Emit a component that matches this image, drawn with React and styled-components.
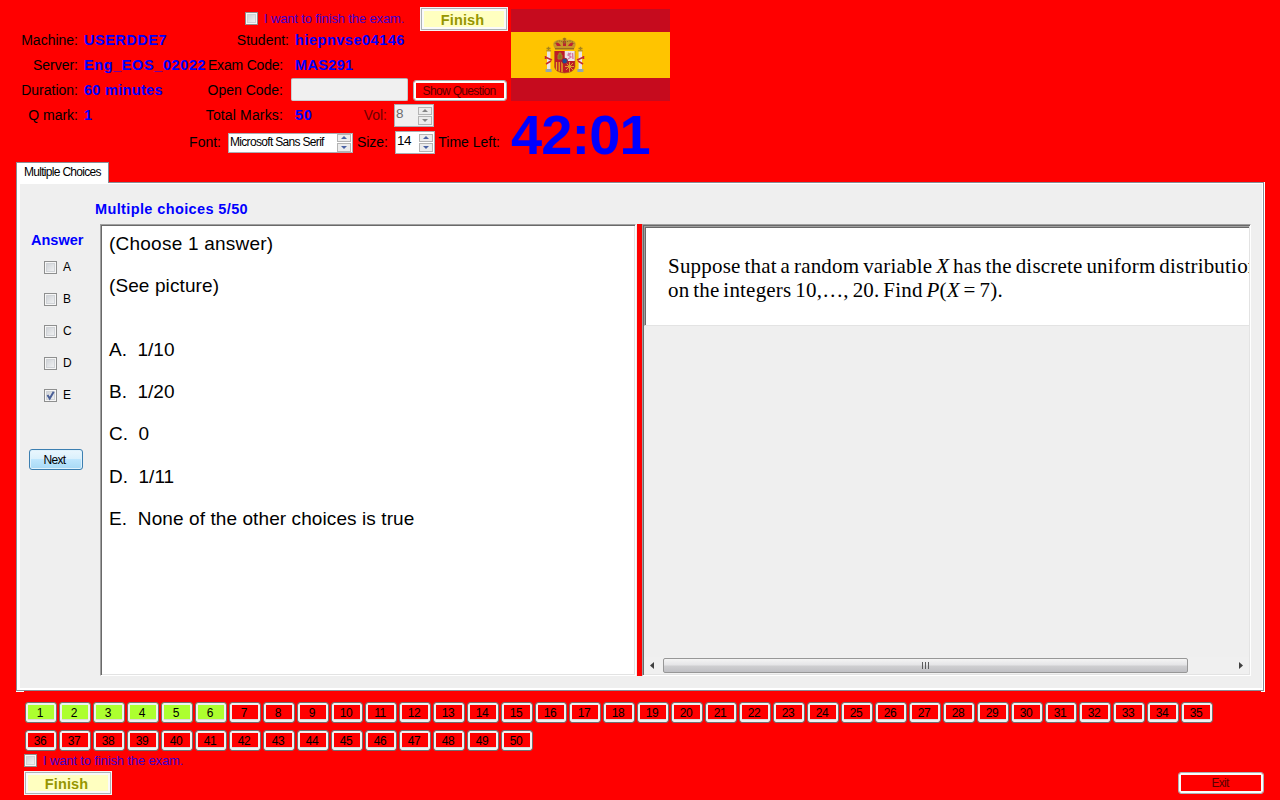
import React from "react";
import styled, { createGlobalStyle } from "styled-components";

const Global = createGlobalStyle`
  * { box-sizing: border-box; }
  body { margin: 0; background: #ff0000; overflow: hidden; }
  button { font: inherit; margin: 0; padding: 0; }
  svg { display: block; flex: none; }
`;

const Page = styled.div`
  width: 1280px;
  height: 800px;
  display: flex;
  flex-direction: column;
  background: #ff0000;
  color: #000;
  font-family: "Liberation Sans", Arial, sans-serif;
  font-size: 14px;
  line-height: 16px;
  white-space: pre;
`;

const Header = styled.header`
  height: 162px;
  flex: none;
  display: flex;
`;

const Info = styled.div`
  width: 511px;
  flex: none;
  display: flex;
  flex-direction: column;
`;

const InfoRow = styled.div`
  height: ${(p) => p.$h || 25}px;
  flex: none;
  display: flex;
  align-items: center;
`;

const TopRow = styled(InfoRow)`
  align-items: flex-start;
  padding: 7px 0 0 245px;
`;

const Label = styled.span`
  width: ${(p) => p.$w}px;
  flex: none;
  text-align: right;
  padding-bottom: 2px;
  letter-spacing: ${(p) => p.$ls || 0}px;
  color: ${(p) => (p.$dim ? "#6d0000" : "#000")};
`;

const Value = styled.span`
  width: ${(p) => p.$w}px;
  flex: none;
  padding: 0 0 2px ${(p) => p.$left || 6}px;
  font-size: 14.5px;
  font-weight: bold;
  color: #0000ff;
  letter-spacing: ${(p) => p.$ls || 0}px;
`;

const Check = styled.span`
  width: 13px;
  height: 13px;
  flex: none;
  display: flex;
  border: 1px solid #8e8f8f;
  background: linear-gradient(135deg, #c8ccd1, #f8f8f8);
  box-shadow: inset 0 0 0 1px #f6f6f6, inset 0 0 0 2px #d0d3d7;
`;

const ConfirmWrap = styled.div`
  display: flex;
  height: 13px;
  width: 175px;
  flex: none;
  align-items: center;
  margin-top: ${(p) => p.$top || 0}px;
`;

const ConfirmText = styled.span`
  padding-left: 6px;
  font-size: 13px;
  letter-spacing: -0.14px;
  color: #4000d0;
`;

const FinishButton = styled.button`
  width: 88px;
  height: 24px;
  flex: none;
  border: 1px solid #f4f4f4;
  background: #ffffc0;
  box-shadow: inset 0 0 0 1px #adb2b5, inset 0 0 0 3px #fafafa;
  font-size: 14.5px;
  font-weight: bold;
  letter-spacing: 0.15px;
  color: #969600;
  padding: 2px 3px 0 0;
`;

const RedButton = styled.button`
  width: ${(p) => p.$w}px;
  height: ${(p) => p.$h}px;
  flex: none;
  border: 1px solid #adb2b5;
  border-radius: 3px;
  background: #ff0000;
  box-shadow: inset 0 0 0 2px #fcfcfc;
  font-size: 12px;
  letter-spacing: ${(p) => p.$ls}px;
  color: #5a0000;
  padding-right: 2px;
`;

const CodeInput = styled.div`
  width: 117px;
  height: 23px;
  margin: 0 5px 2px 8px;
  background: #f0f0f0;
  border: 1px solid #c9cdd0;
  border-top-color: #abadb3;
  border-radius: 2px;
`;

const SpinBox = styled.div`
  width: ${(p) => p.$w}px;
  height: ${(p) => p.$h}px;
  flex: none;
  display: flex;
  align-items: center;
  justify-content: space-between;
  margin-left: 7px;
  padding-left: 1px;
  border: 1px solid #abadb3;
  background: ${(p) => (p.$off ? "#f0f0f0" : "#fff")};
  color: ${(p) => (p.$off ? "#6d6d6d" : "#000")};
  font-size: ${(p) => p.$fs}px;
  letter-spacing: ${(p) => p.$ls || 0}px;
`;

const SpinText = styled.span`
  padding-bottom: ${(p) => p.$lift}px;
`;

const Arrows = styled.span`
  width: 14px;
  height: 18px;
  margin-right: 1px;
  display: grid;
  grid-template-rows: 1fr 1fr;
  gap: 1px;
`;

const Arrow = styled.span`
  border: 1px solid #b4b4b4;
  background: #ececec;
  display: flex;
  align-items: center;
  justify-content: center;
`;

const Side = styled.div`
  display: flex;
  flex-direction: column;
  padding-top: 9px;
`;

const Timer = styled.div`
  font-size: 56px;
  line-height: 64px;
  font-weight: bold;
  color: #0000ff;
  margin-top: 2px;
  letter-spacing: -0.9px;
`;

const Tab = styled.div`
  width: 93px;
  height: 21px;
  flex: none;
  position: relative;
  margin: 0 0 -1px 16px;
  padding: 1px 0 0 7px;
  border: 1px solid #898c95;
  border-bottom: 0;
  background: #fff;
  font-size: 12px;
  line-height: 17px;
  letter-spacing: -0.7px;
`;

const PanelFrame = styled.div`
  width: 1249px;
  height: 510px;
  flex: none;
  margin-left: 16px;
  padding-right: 1px;
  background: linear-gradient(90deg, #fff 8px, #ff0000 8px, #ff0000 1245px, #fff 1245px);
`;

const Panel = styled.main`
  height: 509px;
  display: flex;
  border: 1px solid #898c95;
  background: #efefef;
  box-shadow: inset 3px 0 #fff, inset -1px 1px #fff, inset 0 -2px #fff;
`;

const Answers = styled.aside`
  width: 83px;
  flex: none;
  display: flex;
  flex-direction: column;
  padding: 49px 0 0 12px;
`;

const Heading = styled.h2`
  margin: 0 0 0 ${(p) => p.$left}px;
  font-size: 14.5px;
  line-height: 16px;
  font-weight: bold;
  letter-spacing: ${(p) => p.$ls}px;
  color: #0000ff;
`;

const Choices = styled.div`
  display: flex;
  flex-direction: column;
  gap: 19px;
  padding: 13px 0 0 15px;
`;

const Choice = styled.label`
  display: flex;
  height: 13px;
  align-items: center;
  gap: 6px;
  font-size: 12px;
  line-height: 13px;
`;

const NextButton = styled.button`
  width: 54px;
  height: 21px;
  margin-top: 47px;
  border: 1px solid #3c7fb1;
  border-radius: 3px;
  background: linear-gradient(#eaf6fd, #d9f0fc 50%, #bee6fd 50%, #a7d9f5);
  box-shadow: inset 0 0 0 1px #dff2fc;
  font-size: 12px;
  letter-spacing: -0.7px;
  padding-right: 3px;
`;

const Work = styled.section`
  display: flex;
  flex-direction: column;
  padding-top: 18px;
`;

const Split = styled.div`
  display: flex;
  height: 452px;
  margin-top: 7px;
`;

const QuestionText = styled.div`
  width: 536px;
  border: 1px solid #fff;
  border-top-color: #a0a0a0;
  border-left-color: #a0a0a0;
  box-shadow: inset 1px 1px #696969, inset -1px -1px #e3e3e3;
  background: #fff;
  padding: 8px 0 0 8px;
  font-size: 19px;
  line-height: 22px;
`;

const Line = styled.p`
  margin: 0 0 ${(p) => p.$gap}px;
  height: 22px;
  letter-spacing: ${(p) => p.$ls}px;
`;

const Splitter = styled.div`
  width: 5px;
  margin: 0 0 0 1px;
  background: #ff0000;
`;

const PictureArea = styled.div`
  width: 609px;
  border: 1px solid #fff;
  border-top-color: #a0a0a0;
  border-left-color: #a0a0a0;
  box-shadow: inset 1px 1px #696969, inset -1px -1px #e3e3e3;
  display: flex;
  flex-direction: column;
  padding: 1px;
`;

const Picture = styled.div`
  height: 100px;
  overflow: hidden;
  flex: none;
  border-top: 1px solid #a0a0a0;
  border-left: 1px solid #a0a0a0;
  border-bottom: 1px solid #e3e3e3;
  box-shadow: inset 1px 1px #696969;
  background: #fff;
  padding: 27px 0 0 23px;
  font-family: "Liberation Serif", "Times New Roman", serif;
  font-size: 21px;
  line-height: 24px;
  letter-spacing: 0.2px;
  word-spacing: -1.6px;
`;

const MathLine = styled.div`
  height: 24px;
`;

const ScrollBar = styled.div`
  height: 17px;
  margin-top: auto;
  display: flex;
  align-items: center;
  justify-content: space-between;
  background: #f0f0f0;
  padding: 0 6px 0 6px;
`;

const Thumb = styled.div`
  width: 525px;
  height: 15px;
  margin-right: 43px;
  display: flex;
  align-items: center;
  justify-content: center;
  gap: 2px;
  border: 1px solid #979797;
  border-radius: 2px;
  background: linear-gradient(#f4f4f4, #e4e4e6 48%, #cfcfd1 52%, #c0c0c4);
`;

const Grip = styled.span`
  width: 1px;
  height: 7px;
  background: #5c5c5c;
`;

const NumberGrid = styled.nav`
  display: grid;
  grid-template-columns: repeat(35, 32px);
  grid-auto-rows: 21px;
  gap: 7px 2px;
  margin: 10px 0 0 25px;
`;

const NumberButton = styled.button`
  border: 1px solid #707070;
  border-radius: 3px;
  background: ${(p) => (p.$done ? "#adff2f" : "#ff0000")};
  box-shadow: inset 0 0 0 2px #f0f0f0, inset 0 -3px #dcdcdc;
  font-size: 12px;
  line-height: 17px;
  letter-spacing: -0.4px;
  color: #000;
  padding: 1px 2px 0 0;
`;

const Footer = styled.footer`
  display: flex;
  align-items: flex-end;
  justify-content: space-between;
  padding: 3px 16px 0 24px;
`;

const FooterLeft = styled.div`
  display: flex;
  flex-direction: column;
  gap: 4px;
`;

const FooterExit = styled.div`
  display: flex;
  padding-bottom: 1px;
`;

function Spinner({ off }) {
  const c = off ? "#858585" : "#4a62a4";
  return (
    <Arrows>
      <Arrow>
        <svg width="6" height="3" viewBox="0 0 6 3">
          <path d="M0 3L3 0L6 3Z" fill={c} />
        </svg>
      </Arrow>
      <Arrow>
        <svg width="6" height="3" viewBox="0 0 6 3">
          <path d="M0 0L3 3L6 0Z" fill={c} />
        </svg>
      </Arrow>
    </Arrows>
  );
}

function Confirm({ top }) {
  return (
    <ConfirmWrap $top={top}>
      <Check />
      <ConfirmText>I want to finish the exam.</ConfirmText>
    </ConfirmWrap>
  );
}

function Pillar({ x, flip }) {
  return (
    <g transform={flip ? `translate(${x + 7} 0) scale(-1 1)` : `translate(${x} 0)`}>
      <path d="M1.5 39.5h4M3.5 37.8v4" stroke="#a5821c" strokeWidth="1.3" />
      <rect x="2" y="42" width="3.4" height="18" fill="#e8e5e3" />
      <rect x="1.3" y="41" width="4.8" height="1.5" fill="#b99628" />
      <rect x="0.6" y="60" width="6" height="3" fill="#93a6ae" />
      <path d="M0 48L7 51M1 55L6 52M0.5 47V50" stroke="#c42a32" strokeWidth="1.5" />
    </g>
  );
}

function Flag() {
  return (
    <svg width="159" height="92" viewBox="0 0 159 92">
      <rect width="159" height="92" fill="#c60b1e" />
      <rect y="23" width="159" height="46" fill="#ffc400" />
      <g fill="none">
        <Pillar x={34} />
        <Pillar x={66} flip />
        <path d="M44 40C39 32 46 30 53.5 31C61 30 68 32 63 40Z" fill="#c7962a" />
        <path d="M46 37C43 33 47 32 50 37M57 37C60 32 64 33 61 37M52 37V32H55V37" fill="#bd2231" />
        <path d="M44 39.8H63M53.5 28.8V34M51.8 30H55.2" stroke="#9a6d1c" strokeWidth="1.5" />
        <path d="M44 35C45 31 51 31 53.5 35C56 31 62 31 63 35" stroke="#8a6f26" strokeWidth="1" strokeDasharray="1.5 1" />
        <path d="M43.5 42H64V58Q63 63.5 53.7 64Q44.5 63.5 43.5 58Z" fill="#bd1b28" />
        <path d="M53.7 42H64V52H53.7Z" fill="#ece4e7" />
        <path d="M45.5 53V61M48.2 53V62.5M51 53V63" stroke="#e7b51d" strokeWidth="1.3" />
        <path d="M47 50V46H48V44H50V46H51V50Z" fill="#8b7022" stroke="#a48124" />
        <path d="M60 44L57 46L60 48L57 50M61.5 44L62 50M57 44L60 46" stroke="#d778a2" strokeWidth="1.4" />
        <path d="M55 54L62 61M62 54L55 61M58.5 53V63M54 57.5H63" stroke="#dda129" strokeWidth="1" />
        <circle cx="53.7" cy="52" r="2.8" fill="#1f4d91" stroke="#a41c33" strokeWidth="1" />
        <path d="M43.5 42V58Q44.5 63.5 53.7 64Q63 63.5 64 58V42" stroke="#a7681b" strokeWidth=".6" />
      </g>
    </svg>
  );
}

const LINES = [
  ["(Choose 1 answer)", 20, 0.23],
  ["(See picture)", 42, 0.1],
  ["A.  1/10", 20, 0],
  ["B.  1/20", 20, 0],
  ["C.  0", 21, 0],
  ["D.  1/11", 20, 0],
  ["E.  None of the other choices is true", 0, 0.09],
];

export default function App() {
  return (
    <Page>
      <Global />
      <Header>
        <Info>
          <TopRow $h={28}>
            <Confirm top={5} />
            <FinishButton>Finish</FinishButton>
          </TopRow>
          <InfoRow>
            <Label $w={78}>Machine:</Label>
            <Value $w={127} $ls={0.5}>USERDDE7</Value>
            <Label $w={84}>Student:</Label>
            <Value $w={200} $ls={0.52}>hiepnvse04146</Value>
          </InfoRow>
          <InfoRow>
            <Label $w={78}>Server:</Label>
            <Value $w={127} $ls={0.6}>Eng_EOS_02022</Value>
            <Label $w={78} $ls={-0.2}>Exam Code:</Label>
            <Value $w={200} $left={12} $ls={0.35}>MAS291</Value>
          </InfoRow>
          <InfoRow>
            <Label $w={78}>Duration:</Label>
            <Value $w={127} $ls={0.3}>60 minutes</Value>
            <Label $w={78}>Open Code:</Label>
            <CodeInput />
            <RedButton $w={94} $h={21} $ls={-0.65}>Show Question</RedButton>
          </InfoRow>
          <InfoRow>
            <Label $w={78}>Q mark:</Label>
            <Value $w={127}>1</Value>
            <Label $w={78} $ls={0.15}>Total Marks:</Label>
            <Value $w={74} $left={12} $ls={0.8}>50</Value>
            <Label $w={30} $dim>Vol:</Label>
            <SpinBox $w={40} $h={23} $fs={13.5} $off>
              <SpinText $lift={3}>8</SpinText>
              <Spinner off />
            </SpinBox>
          </InfoRow>
          <InfoRow $h={29}>
            <Label $w={221}>Font:</Label>
            <SpinBox $w={125} $h={20} $fs={12} $ls={-0.68}>
              <SpinText $lift={2}>Microsoft Sans Serif</SpinText>
              <Spinner />
            </SpinBox>
            <Label $w={35}>Size:</Label>
            <SpinBox $w={40} $h={23} $fs={13.5} $ls={-0.5}>
              <SpinText $lift={3}>14</SpinText>
              <Spinner />
            </SpinBox>
            <Label $w={65}>Time Left:</Label>
          </InfoRow>
        </Info>
        <Side>
          <Flag />
          <Timer>42:01</Timer>
        </Side>
      </Header>

      <Tab>Multiple Choices</Tab>
      <PanelFrame>
        <Panel>
          <Answers>
            <Heading $ls={0} $left={2}>Answer</Heading>
            <Choices>
              {["A", "B", "C", "D", "E"].map((c) => (
                <Choice key={c}>
                  <Check>
                    {c === "E" && (
                      <svg width="11" height="11" viewBox="0 0 11 11">
                        <path d="M2.5 5L4.7 8.5L8.7 1.8" fill="none" stroke="#4a5f97" strokeWidth="2" />
                      </svg>
                    )}
                  </Check>
                  {c}
                </Choice>
              ))}
            </Choices>
            <NextButton>Next</NextButton>
          </Answers>
          <Work>
            <Heading $ls={0.38} $left={-5}>Multiple choices 5/50</Heading>
            <Split>
              <QuestionText>
                {LINES.map(([t, gap, ls]) => (
                  <Line key={t} $gap={gap} $ls={ls}>{t}</Line>
                ))}
              </QuestionText>
              <Splitter />
              <PictureArea>
                <Picture>
                  <MathLine>
                    Suppose that a random variable <i>X</i> has the discrete uniform distribution
                  </MathLine>
                  <MathLine>
                    on the integers 10,…, 20. Find <i>P</i>(<i>X</i> = 7).
                  </MathLine>
                </Picture>
                <ScrollBar>
                  <svg width="4" height="7" viewBox="0 0 4 7"><path d="M4 0V7L0 3.5Z" fill="#404040" /></svg>
                  <Thumb><Grip /><Grip /><Grip /></Thumb>
                  <svg width="4" height="7" viewBox="0 0 4 7"><path d="M0 0V7L4 3.5Z" fill="#404040" /></svg>
                </ScrollBar>
              </PictureArea>
            </Split>
          </Work>
        </Panel>
      </PanelFrame>

      <NumberGrid>
        {Array.from({ length: 50 }, (_, i) => (
          <NumberButton key={i} $done={i < 6}>{i + 1}</NumberButton>
        ))}
      </NumberGrid>
      <Footer>
        <FooterLeft>
          <Confirm />
          <FinishButton>Finish</FinishButton>
        </FooterLeft>
        <FooterExit>
          <RedButton $w={86} $h={22} $ls={-0.7}>Exit</RedButton>
        </FooterExit>
      </Footer>
    </Page>
  );
}
